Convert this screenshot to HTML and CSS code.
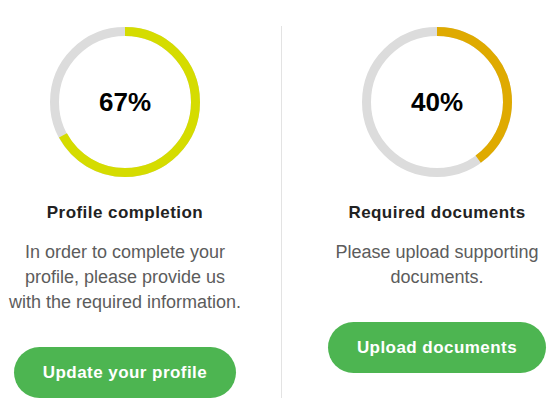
FILE: index.html
```html
<!DOCTYPE html>
<html lang="en">
<head>
<meta charset="utf-8">
<title>Progress</title>
<link rel="stylesheet" href="styles.css">
</head>
<body>
<main class="panels">
  <section class="panel">
    <div class="ring">
      <svg class="ring-svg" viewBox="0 0 150 150" width="150" height="150">
        <circle class="ring-track" cx="75" cy="75" r="70.5"></circle>
        <circle class="ring-bar ring-bar-profile" cx="75" cy="75" r="70.5" style="stroke-dasharray: 296.8 443"></circle>
      </svg>
      <span class="ring-value">67%</span>
    </div>
    <h2 class="panel-title">Profile completion</h2>
    <p class="panel-text">In order to complete your profile, please provide us with the required information.</p>
    <a class="btn" href="#">Update your profile</a>
  </section>
  <section class="panel panel-right">
    <div class="ring">
      <svg class="ring-svg" viewBox="0 0 150 150" width="150" height="150">
        <circle class="ring-track" cx="75" cy="75" r="70.5"></circle>
        <circle class="ring-bar ring-bar-docs" cx="75" cy="75" r="70.5" style="stroke-dasharray: 177.2 443"></circle>
      </svg>
      <span class="ring-value">40%</span>
    </div>
    <h2 class="panel-title">Required documents</h2>
    <p class="panel-text">Please upload supporting documents.</p>
    <a class="btn" href="#">Upload documents</a>
  </section>
</main>
</body>
</html>
```

FILE: styles.css
```css
html, body {
  margin: 0;
  padding: 0;
  background: #ffffff;
  overflow: hidden;
}

body {
  font-family: "Liberation Sans", Arial, sans-serif;
  color: #222222;
}

.panels {
  display: flex;
  align-items: stretch;
  padding-top: 26px;
}

.panel {
  width: 250px;
  flex: none;
  display: flex;
  flex-direction: column;
  align-items: center;
  padding-top: 1px;
}

.panel:first-child {
  margin-right: 31px;
}

.panel-right {
  border-left: 1px solid #e3e3e3;
  padding-left: 30px;
}

.ring {
  position: relative;
  width: 150px;
  height: 150px;
}

.ring-svg {
  display: block;
  transform: rotate(-90deg);
}

.ring-track {
  fill: none;
  stroke: #dcdcdc;
  stroke-width: 9;
}

.ring-bar {
  fill: none;
  stroke-width: 9;
  stroke-linecap: butt;
}

.ring-bar-profile {
  stroke: #d5dc00;
}

.ring-bar-docs {
  stroke: #dfaa00;
}

.ring-value {
  position: absolute;
  inset: 0;
  display: flex;
  align-items: center;
  justify-content: center;
  font-size: 26px;
  font-weight: bold;
  color: #000000;
}

.panel-title {
  margin: 26px 0 0;
  font-size: 17px;
  line-height: 20px;
  font-weight: bold;
  letter-spacing: 0.45px;
  color: #222222;
}

.panel-text {
  margin: 17px 0 0;
  max-width: 236px;
  font-size: 18px;
  line-height: 25px;
  text-align: center;
  color: #5c5c5c;
}

.btn {
  margin-top: 32px;
  height: 51px;
  padding: 0 29px;
  display: flex;
  align-items: center;
  border-radius: 26px;
  background: #4db551;
  color: #ffffff;
  font-size: 17px;
  font-weight: bold;
  letter-spacing: 0.45px;
  text-decoration: none;
}
```
